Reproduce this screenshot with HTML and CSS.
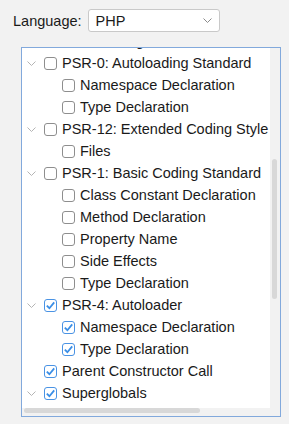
FILE: index.html
```html
<!DOCTYPE html>
<html lang="en">
<head>
    <meta charset="UTF-8">
    <meta name="viewport" content="width=device-width, initial-scale=1.0">
    <title>Inspections</title>
    <link rel="stylesheet" href="styles.css">
</head>
<body>
    <div class="toolbar">
        <label for="lang">Language:</label>
        <div class="select" id="lang">
            <span>PHP</span>
            <svg width="9" height="5" viewBox="0 0 9 5"><path d="M0.5 0.5 L4.5 4.5 L8.5 0.5" fill="none" stroke="#8a8a8a" stroke-width="1"/></svg>
        </div>
    </div>

    <div class="tree">
        <div class="viewport">
            <div class="list">
                <div class="row child"><span class="box"></span>Line Length</div>

                <!-- PSR-0 -->
                <div class="row"><span class="arrow"><svg width="9" height="5" viewBox="0 0 9 5"><path d="M0.5 0.5 L4.5 4.5 L8.5 0.5" fill="none" stroke="#b4b4b4" stroke-width="1"/></svg></span><span class="box"></span>PSR-0: Autoloading Standard</div>
                <div class="row child"><span class="box"></span>Namespace Declaration</div>
                <div class="row child"><span class="box"></span>Type Declaration</div>

                <!-- PSR-12 -->
                <div class="row"><span class="arrow"><svg width="9" height="5" viewBox="0 0 9 5"><path d="M0.5 0.5 L4.5 4.5 L8.5 0.5" fill="none" stroke="#b4b4b4" stroke-width="1"/></svg></span><span class="box"></span>PSR-12: Extended Coding Style</div>
                <div class="row child"><span class="box"></span>Files</div>

                <!-- PSR-1 -->
                <div class="row"><span class="arrow"><svg width="9" height="5" viewBox="0 0 9 5"><path d="M0.5 0.5 L4.5 4.5 L8.5 0.5" fill="none" stroke="#b4b4b4" stroke-width="1"/></svg></span><span class="box"></span>PSR-1: Basic Coding Standard</div>
                <div class="row child"><span class="box"></span>Class Constant Declaration</div>
                <div class="row child"><span class="box"></span>Method Declaration</div>
                <div class="row child"><span class="box"></span>Property Name</div>
                <div class="row child"><span class="box"></span>Side Effects</div>
                <div class="row child"><span class="box"></span>Type Declaration</div>

                <!-- PSR-4 -->
                <div class="row"><span class="arrow"><svg width="9" height="5" viewBox="0 0 9 5"><path d="M0.5 0.5 L4.5 4.5 L8.5 0.5" fill="none" stroke="#b4b4b4" stroke-width="1"/></svg></span><span class="box checked"><svg width="11" height="11" viewBox="0 0 11 11"><path d="M1.8 5.6 L4.4 8.2 L9.2 2.4" fill="none" stroke="#3a8ee6" stroke-width="1.8"/></svg></span>PSR-4: Autoloader</div>
                <div class="row child"><span class="box checked"><svg width="11" height="11" viewBox="0 0 11 11"><path d="M1.8 5.6 L4.4 8.2 L9.2 2.4" fill="none" stroke="#3a8ee6" stroke-width="1.8"/></svg></span>Namespace Declaration</div>
                <div class="row child"><span class="box checked"><svg width="11" height="11" viewBox="0 0 11 11"><path d="M1.8 5.6 L4.4 8.2 L9.2 2.4" fill="none" stroke="#3a8ee6" stroke-width="1.8"/></svg></span>Type Declaration</div>

                <div class="row"><span class="arrow"></span><span class="box checked"><svg width="11" height="11" viewBox="0 0 11 11"><path d="M1.8 5.6 L4.4 8.2 L9.2 2.4" fill="none" stroke="#3a8ee6" stroke-width="1.8"/></svg></span>Parent Constructor Call</div>
                <div class="row"><span class="arrow"><svg width="9" height="5" viewBox="0 0 9 5"><path d="M0.5 0.5 L4.5 4.5 L8.5 0.5" fill="none" stroke="#b4b4b4" stroke-width="1"/></svg></span><span class="box checked"><svg width="11" height="11" viewBox="0 0 11 11"><path d="M1.8 5.6 L4.4 8.2 L9.2 2.4" fill="none" stroke="#3a8ee6" stroke-width="1.8"/></svg></span>Superglobals</div>
            </div>
        </div>
        <div class="vtrack"><div class="vthumb"></div></div>
        <div class="htrack"><div class="hthumb"></div></div>
        <div class="corner"></div>
    </div>
</body>
</html>
```

FILE: styles.css
```css
* {
    margin: 0;
    padding: 0;
    box-sizing: border-box;
}

body {
    font-family: "Liberation Sans", Arial, sans-serif;
    font-size: 14.5px;
    color: #1a1a1a;
    background-color: #f2f2f2;
    padding: 9px 8px 0 13px;
}

.toolbar {
    display: flex;
    align-items: center;
    gap: 6px;
}

.select {
    width: 132px;
    height: 23px;
    background-color: #fff;
    border: 1px solid #c9c9c9;
    border-radius: 3px;
    display: flex;
    align-items: center;
    justify-content: space-between;
    padding: 0 7px 0 7px;
}

.tree {
    margin: 15px 0 0 8px;
    width: 260px;
    height: 370px;
    border: 1px solid #82a9dc;
    display: grid;
    grid-template-columns: 248px 10px;
    grid-template-rows: 360px 8px;
}

.viewport {
    background-color: #fff;
    overflow: hidden;
}

.list {
    margin-top: -18px;
}

.row {
    height: 22px;
    display: flex;
    align-items: center;
    white-space: nowrap;
    padding-left: 4px;
}

.row.child {
    padding-left: 40px;
}

.arrow {
    width: 18px;
    height: 22px;
    display: flex;
    align-items: center;
    padding-left: 1px;
    padding-top: 1px;
    flex-shrink: 0;
}

.box {
    width: 13px;
    height: 13px;
    border: 1px solid #8e8e8e;
    border-radius: 3px;
    background-color: #fff;
    margin-right: 5px;
    flex-shrink: 0;
    display: flex;
    align-items: center;
    justify-content: center;
}

.box.checked {
    border-color: #4a93e4;
}

.vtrack {
    background-color: #f2f2f2;
    padding: 111px 0 0 2px;
}

.vthumb {
    width: 5px;
    height: 140px;
    border-radius: 3px;
    background-color: #d8d8d8;
}

.htrack {
    background-color: #f2f2f2;
    padding: 0 0 0 2px;
}

.hthumb {
    width: 176px;
    height: 5px;
    border-radius: 3px;
    background-color: #d8d8d8;
}

.corner {
    background-color: #f2f2f2;
}
```
